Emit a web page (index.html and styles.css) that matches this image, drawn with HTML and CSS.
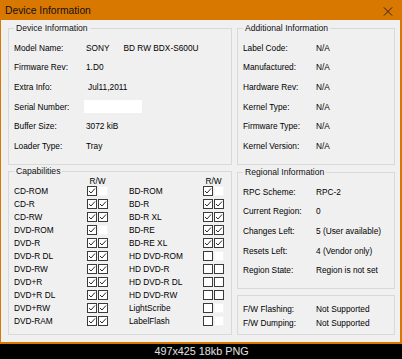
FILE: index.html
```html
<!DOCTYPE html>
<html>
<head>
<meta charset="utf-8">
<link rel="stylesheet" href="styles.css">
</head>
<body>
<div class="window">
  <div class="titlebar">
    <span class="title">Device Information</span>
    <svg class="close" viewBox="0 0 10 10"><path d="M0.5 0.5 L9.5 9.5 M9.5 0.5 L0.5 9.5"/></svg>
  </div>
  <div class="body">
    <fieldset class="group top">
      <legend>Device Information</legend>
      <div class="kv dev">
        <span>Model Name:</span><span class="v">SONY<span class="model">BD RW BDX-S600U</span></span>
        <span>Firmware Rev:</span><span class="v">1.D0</span>
        <span>Extra Info:</span><span class="v extra">Jul11,2011</span>
        <span>Serial Number:</span><span class="v"><span class="serial"></span></span>
        <span>Buffer Size:</span><span class="v">3072 kiB</span>
        <span>Loader Type:</span><span class="v">Tray</span>
      </div>
    </fieldset>
    <fieldset class="group top">
      <legend>Additional Information</legend>
      <div class="kv add">
        <span>Label Code:</span><span>N/A</span>
        <span>Manufactured:</span><span>N/A</span>
        <span>Hardware Rev:</span><span>N/A</span>
        <span>Kernel Type:</span><span>N/A</span>
        <span>Firmware Type:</span><span>N/A</span>
        <span>Kernel Version:</span><span>N/A</span>
      </div>
    </fieldset>
    <fieldset class="group caps">
      <legend>Capabilities</legend>
      <div class="capgrid">
        <span></span><span class="rw">R/W</span><span></span><span></span><span class="rw">R/W</span>

        <span>CD-ROM</span><span class="pair"><span class="cb"><svg viewBox="0 0 8 8"><path d="M1 4 L3 6 L7 1.5"/></svg></span><span class="cb blank"></span></span><span></span>
        <span>BD-ROM</span><span class="pair"><span class="cb"><svg viewBox="0 0 8 8"><path d="M1 4 L3 6 L7 1.5"/></svg></span><span class="cb blank"></span></span>

        <span>CD-R</span><span class="pair"><span class="cb"><svg viewBox="0 0 8 8"><path d="M1 4 L3 6 L7 1.5"/></svg></span><span class="cb"><svg viewBox="0 0 8 8"><path d="M1 4 L3 6 L7 1.5"/></svg></span></span><span></span>
        <span>BD-R</span><span class="pair"><span class="cb"><svg viewBox="0 0 8 8"><path d="M1 4 L3 6 L7 1.5"/></svg></span><span class="cb"><svg viewBox="0 0 8 8"><path d="M1 4 L3 6 L7 1.5"/></svg></span></span>

        <span>CD-RW</span><span class="pair"><span class="cb"><svg viewBox="0 0 8 8"><path d="M1 4 L3 6 L7 1.5"/></svg></span><span class="cb"><svg viewBox="0 0 8 8"><path d="M1 4 L3 6 L7 1.5"/></svg></span></span><span></span>
        <span>BD-R XL</span><span class="pair"><span class="cb"><svg viewBox="0 0 8 8"><path d="M1 4 L3 6 L7 1.5"/></svg></span><span class="cb"><svg viewBox="0 0 8 8"><path d="M1 4 L3 6 L7 1.5"/></svg></span></span>

        <span>DVD-ROM</span><span class="pair"><span class="cb"><svg viewBox="0 0 8 8"><path d="M1 4 L3 6 L7 1.5"/></svg></span><span class="cb blank"></span></span><span></span>
        <span>BD-RE</span><span class="pair"><span class="cb"><svg viewBox="0 0 8 8"><path d="M1 4 L3 6 L7 1.5"/></svg></span><span class="cb"><svg viewBox="0 0 8 8"><path d="M1 4 L3 6 L7 1.5"/></svg></span></span>

        <span>DVD-R</span><span class="pair"><span class="cb"><svg viewBox="0 0 8 8"><path d="M1 4 L3 6 L7 1.5"/></svg></span><span class="cb"><svg viewBox="0 0 8 8"><path d="M1 4 L3 6 L7 1.5"/></svg></span></span><span></span>
        <span>BD-RE XL</span><span class="pair"><span class="cb"><svg viewBox="0 0 8 8"><path d="M1 4 L3 6 L7 1.5"/></svg></span><span class="cb"><svg viewBox="0 0 8 8"><path d="M1 4 L3 6 L7 1.5"/></svg></span></span>

        <span>DVD-R DL</span><span class="pair"><span class="cb"><svg viewBox="0 0 8 8"><path d="M1 4 L3 6 L7 1.5"/></svg></span><span class="cb"><svg viewBox="0 0 8 8"><path d="M1 4 L3 6 L7 1.5"/></svg></span></span><span></span>
        <span>HD DVD-ROM</span><span class="pair"><span class="cb"></span><span class="cb blank"></span></span>

        <span>DVD-RW</span><span class="pair"><span class="cb"><svg viewBox="0 0 8 8"><path d="M1 4 L3 6 L7 1.5"/></svg></span><span class="cb"><svg viewBox="0 0 8 8"><path d="M1 4 L3 6 L7 1.5"/></svg></span></span><span></span>
        <span>HD DVD-R</span><span class="pair"><span class="cb"></span><span class="cb"></span></span>

        <span>DVD+R</span><span class="pair"><span class="cb"><svg viewBox="0 0 8 8"><path d="M1 4 L3 6 L7 1.5"/></svg></span><span class="cb"><svg viewBox="0 0 8 8"><path d="M1 4 L3 6 L7 1.5"/></svg></span></span><span></span>
        <span>HD DVD-R DL</span><span class="pair"><span class="cb"></span><span class="cb"></span></span>

        <span>DVD+R DL</span><span class="pair"><span class="cb"><svg viewBox="0 0 8 8"><path d="M1 4 L3 6 L7 1.5"/></svg></span><span class="cb"><svg viewBox="0 0 8 8"><path d="M1 4 L3 6 L7 1.5"/></svg></span></span><span></span>
        <span>HD DVD-RW</span><span class="pair"><span class="cb"></span><span class="cb"></span></span>

        <span>DVD+RW</span><span class="pair"><span class="cb"><svg viewBox="0 0 8 8"><path d="M1 4 L3 6 L7 1.5"/></svg></span><span class="cb"><svg viewBox="0 0 8 8"><path d="M1 4 L3 6 L7 1.5"/></svg></span></span><span></span>
        <span>LightScribe</span><span class="pair"><span class="cb"></span><span class="cb blank"></span></span>

        <span>DVD-RAM</span><span class="pair"><span class="cb"><svg viewBox="0 0 8 8"><path d="M1 4 L3 6 L7 1.5"/></svg></span><span class="cb"><svg viewBox="0 0 8 8"><path d="M1 4 L3 6 L7 1.5"/></svg></span></span><span></span>
        <span>LabelFlash</span><span class="pair"><span class="cb"></span><span class="cb blank"></span></span>
      </div>
    </fieldset>
    <div class="rightcol">
      <fieldset class="group regional">
        <legend>Regional Information</legend>
        <div class="kv add">
          <span>RPC Scheme:</span><span>RPC-2</span>
          <span>Current Region:</span><span>0</span>
          <span>Changes Left:</span><span>5 (User available)</span>
          <span>Resets Left:</span><span>4 (Vendor only)</span>
          <span>Region State:</span><span>Region is not set</span>
        </div>
      </fieldset>
      <fieldset class="group fw">
        <div class="kv add fwrows">
          <span>F/W Flashing:</span><span>Not Supported</span>
          <span>F/W Dumping:</span><span>Not Supported</span>
        </div>
      </fieldset>
    </div>
  </div>
</div>
<div class="caption">497x425 18kb PNG</div>
</body>
</html>
```
FILE: styles.css
```css
html, body {
  margin: 0;
  padding: 0;
  background: #000;
}
body {
  width: 402px;
  height: 359px;
  overflow: hidden;
  font-family: "Liberation Sans", Arial, sans-serif;
  color: #000;
}
.window {
  width: 402px;
  height: 344px;
  box-sizing: border-box;
  border-left: 1px solid #d97800;
  border-right: 2px solid #d97800;
  border-bottom: 2px solid #d97800;
  background: #f0f0f0;
  display: flex;
  flex-direction: column;
}
.titlebar {
  height: 20px;
  flex: none;
  background: #d97800;
  display: flex;
  align-items: center;
  justify-content: space-between;
  padding: 0 7px 0 4px;
}
.title {
  font-size: 10.3px;
  color: #111;
  padding-top: 1px;
}
.close {
  width: 10px;
  height: 9px;
  margin-top: 3px;
}
.close path {
  stroke: #1a1a1a;
  stroke-width: 1;
  fill: none;
}
.body {
  flex: 1;
  display: grid;
  grid-template-columns: 224px 158px;
  grid-template-rows: 142px 169px;
  column-gap: 5px;
  row-gap: 1px;
  padding: 3px 5px 0 7px;
  align-content: start;
}
.group {
  margin: 0;
  border: 1px solid #d9d9d9;
  padding: 5px 5px 0 5px;
  min-width: 0;
  box-sizing: border-box;
  font-size: 8.3px;
}
.group legend {
  font-size: 8.6px;
  line-height: 10px;
  padding: 0 2px;
  color: #111;
}
.kv {
  display: grid;
  grid-template-columns: 70px 1fr;
  grid-auto-rows: 19.6px;
  align-items: center;
  white-space: nowrap;
}
.kv.add {
  grid-template-columns: 73px 1fr;
}
.kv.dev .v {
  padding-left: 2px;
}
.kv.dev .v.extra {
  padding-left: 4px;
}
.model {
  margin-left: 14px;
}
.serial {
  display: block;
  width: 58px;
  height: 13px;
  margin-left: -2px;
  background: #fff;
}
.caps {
  padding-top: 0;
}
.capgrid {
  display: grid;
  grid-template-columns: 73px 21px 21px 74px 21px;
  grid-template-rows: 8.5px;
  grid-auto-rows: 13px;
  align-items: center;
  white-space: nowrap;
}
.rw {
  text-align: center;
  font-size: 8.3px;
  line-height: 8.5px;
  padding-top: 2px;
}
.pair {
  display: flex;
  gap: 1px;
  align-items: center;
}
.cb {
  width: 10px;
  height: 10px;
  box-sizing: border-box;
  border: 1px solid #3a3a3a;
  background: #fff;
  display: flex;
}
.cb.blank {
  border-color: #f4f4f4;
}
.cb svg {
  width: 8px;
  height: 8px;
}
.cb path {
  fill: none;
  stroke: #2a2a2a;
  stroke-width: 1;
}
.rightcol {
  display: flex;
  flex-direction: column;
  padding-top: 1px;
  gap: 6px;
}
.regional {
  height: 122px;
}
.fw {
  flex: 1;
  padding-top: 6px;
}
.fwrows {
  grid-auto-rows: 14px;
}
.caption {
  height: 15px;
  line-height: 15px;
  text-align: center;
  color: #e2e2e2;
  font-size: 10.8px;
  padding-left: 1px;
}
```
